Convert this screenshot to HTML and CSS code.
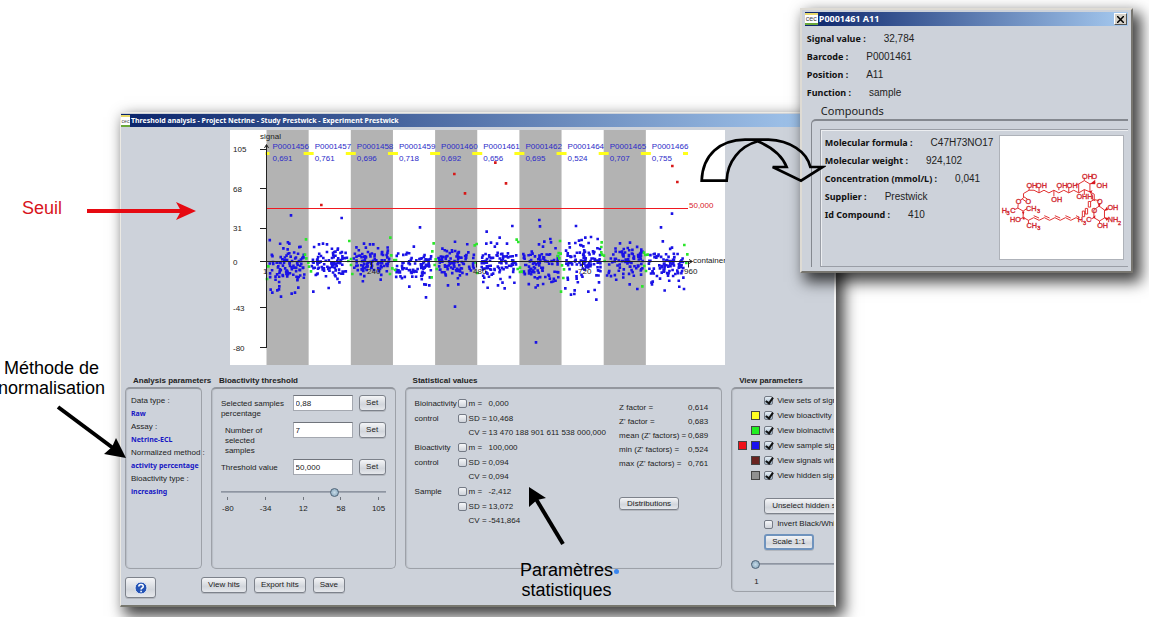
FILE: index.html
```html
<!DOCTYPE html>
<html lang="en">
<head>
<meta charset="utf-8">
<title>Threshold analysis</title>
<link rel="stylesheet" href="styles.css">
</head>
<body>
<div class="desktop">
  <main class="window main-window">
    <header class="titlebar"><span class="logo">cec</span><h1 class="title">Threshold analysis - Project Netrine - Study Prestwick - Experiment Prestwick</h1></header>
    <div class="chart-area">
      <svg class="chart" id="chart" viewBox="230 130 495 235" role="img" aria-label="Signal by container"></svg>
    </div>
    <div class="panels">
      <section class="group">
        <h2 class="group-title indent">Analysis parameters</h2>
        <dl class="box facts">
          <dt>Data type :</dt><dd>Raw</dd>
          <dt>Assay :</dt><dd>Netrine-ECL</dd>
          <dt>Normalized method :</dt><dd>activity percentage</dd>
          <dt>Bioactivity type :</dt><dd>increasing</dd>
        </dl>
      </section>
      <section class="group">
        <h2 class="group-title indent">Bioactivity threshold</h2>
        <div class="box threshold">
          <div class="fields">
            <label for="pct">Selected samples percentage</label><input class="text" id="pct" value="0,88"><button class="btn">Set</button>
            <label class="inset" for="num">Number of selected samples</label><input class="text" id="num" value="7"><button class="btn">Set</button>
            <label for="thr">Threshold value</label><input class="text" id="thr" value="50,000"><button class="btn">Set</button>
          </div>
          <input class="slider" type="range" min="-80" max="105" value="50" aria-label="Threshold">
          <div class="scale"><span>-80</span><span>-34</span><span>12</span><span>58</span><span>105</span></div>
        </div>
      </section>
      <section class="group">
        <h2 class="group-title indent">Statistical values</h2>
        <div class="box stats">
          <div class="stat-list">
            <div class="stat-set">
              <span>Bioinactivity</span><input class="check" type="checkbox" id="a1"><label for="a1">m =</label><span>0,000</span>
              <span>control</span><input class="check" type="checkbox" id="a2"><label for="a2">SD =</label><span>10,468</span>
              <span class="cv">CV =</span><span>13 470 188 901 611 538 000,000</span>
            </div>
            <div class="stat-set">
              <span>Bioactivity</span><input class="check" type="checkbox" id="b1"><label for="b1">m =</label><span>100,000</span>
              <span>control</span><input class="check" type="checkbox" id="b2"><label for="b2">SD =</label><span>0,094</span>
              <span class="cv">CV =</span><span>0,094</span>
            </div>
            <div class="stat-set">
              <span>Sample</span><input class="check" type="checkbox" id="c1"><label for="c1">m =</label><span>-2,412</span>
              <span></span><input class="check" type="checkbox" id="c2"><label for="c2">SD =</label><span>13,072</span>
              <span class="cv">CV =</span><span>-541,864</span>
            </div>
          </div>
          <div class="factors">
            <dl class="factor-list">
              <dt>Z factor =</dt><dd>0,614</dd>
              <dt>Z' factor =</dt><dd>0,683</dd>
              <dt>mean (Z' factors) =</dt><dd>0,689</dd>
              <dt>min (Z' factors) =</dt><dd>0,524</dd>
              <dt>max (Z' factors) =</dt><dd>0,761</dd>
            </dl>
            <button class="btn slim">Distributions</button>
          </div>
        </div>
      </section>
      <section class="group view-group">
        <h2 class="group-title indent">View parameters</h2>
        <div class="box view">
          <div class="option"><span class="swatches"></span><input class="check" type="checkbox" id="v1" checked><label for="v1">View sets of signals</label></div>
          <div class="option"><span class="swatches"><i class="swatch yellow"></i></span><input class="check" type="checkbox" id="v2" checked><label for="v2">View bioactivity control</label></div>
          <div class="option"><span class="swatches"><i class="swatch green"></i></span><input class="check" type="checkbox" id="v3" checked><label for="v3">View bioinactivity control</label></div>
          <div class="option"><span class="swatches"><i class="swatch red"></i><i class="swatch blue"></i></span><input class="check" type="checkbox" id="v4" checked><label for="v4">View sample signals</label></div>
          <div class="option"><span class="swatches"><i class="swatch brown"></i></span><input class="check" type="checkbox" id="v5" checked><label for="v5">View signals without</label></div>
          <div class="option"><span class="swatches"><i class="swatch gray"></i></span><input class="check" type="checkbox" id="v6" checked><label for="v6">View hidden signals</label></div>
          <div class="view-actions">
            <button class="btn wide">Unselect hidden signals</button>
            <div class="invert"><input class="check" type="checkbox" id="inv"><label for="inv">Invert Black/White</label></div>
            <button class="btn focus">Scale 1:1</button>
          </div>
          <input class="slider zoom" type="range" min="1" max="10" value="1" aria-label="Scale">
          <div class="zoom-label">1</div>
        </div>
      </section>
      <footer class="toolbar">
        <button class="btn help" aria-label="Help">
          <svg width="14" height="14" viewBox="0 0 14 14"><circle cx="7" cy="7" r="6" fill="#2453b5" stroke="#e8edf8"/><path d="M4.8 5.6C4.8 2.8 9.3 2.9 9.2 5.4C9.2 7 7.1 6.8 7.1 8.6M7.1 9.8V11.2" fill="none" stroke="#fff" stroke-width="1.6"/></svg>
        </button>
        <button class="btn">View hits</button>
        <button class="btn">Export hits</button>
        <button class="btn">Save</button>
      </footer>
    </div>
  </main>

  <aside class="window popup">
    <header class="titlebar"><span class="logo">cec</span><h2 class="title">P0001461 A11</h2>
      <button class="close" aria-label="Close"><svg width="7" height="7" viewBox="0 0 7 7"><path d="M0 0L7 7M7 0L0 7" stroke="#000" stroke-width="1.5"/></svg></button>
    </header>
    <dl class="details">
      <div><dt>Signal value :</dt><dd>32,784</dd></div>
      <div><dt>Barcode :</dt><dd>P0001461</dd></div>
      <div><dt>Position :</dt><dd>A11</dd></div>
      <div><dt>Function :</dt><dd>sample</dd></div>
    </dl>
    <h3 class="compounds-title">Compounds</h3>
    <div class="compounds">
      <div class="compound">
        <dl class="details">
          <div><dt>Molecular formula :</dt><dd>C47H73NO17</dd></div>
          <div><dt>Molecular weight :</dt><dd>924,102</dd></div>
          <div><dt>Concentration (mmol/L) :</dt><dd>0,041</dd></div>
          <div><dt>Supplier :</dt><dd>Prestwick</dd></div>
          <div><dt>Id Compound :</dt><dd>410</dd></div>
        </dl>
        <svg class="molecule" viewBox="30 16 372 372" role="img" aria-label="Molecule structure">
          <g class="bonds">
            <path d="M268 188L253 180L238 188L223 180L208 188L193 180L178 188L163 180L148 188L133 180L118 180L101 190V203M148 188V172M118 180V170M208 180V172M238 188V172M193 180V198M101 203L91 211M97 206L108 214M101 199L113 207M85 222L84 234L100 243M84 234L73 239M100 243L112 235M100 243V262L90 268M100 262L116 271L132 263L148 271L164 263L180 271L196 263L212 271L228 263L244 271L260 263L275 271M116 271V280M132 257L148 264M164 257L180 264M196 257L212 264M228 257L244 264M260 257L270 262M268 188V161L285 151L302 161V185L285 178L268 188M285 151V142M302 161L318 157M302 185L315 192V208L330 212M268 161L258 164M285 178V194M302 185L310 197V208L318 212M297 214V231H304V214ZM288 235V252H295V235ZM279 243V260H286V243ZM315 208L303 215M330 228L346 240V264L331 273L314 263V239L330 228M346 240L354 235M346 264L357 268M331 273V280M314 263L304 268M330 228V220"/>
            <path class="wedge" d="M302 161L318 162V148ZM346 243L357 240L353 230ZM330 232L326 220H335ZM346 262L358 264L353 273ZM96 245H104L101 254ZM97 267L104 260V269ZM310 264H318V255ZM298 184L306 188L310 180Z"/>
          </g>
          <g class="atoms">
            <text x="110" y="172">OH</text><text x="139" y="172">OH</text><text x="201" y="172">OH</text><text x="232" y="172">OH</text>
            <text x="278" y="145">OH</text><text x="307" y="145">O</text><text x="322" y="172">OH</text><text x="185" y="215">OH</text>
            <text x="261" y="208">OHH</text><text x="78" y="223">O</text><text x="107" y="221">O</text><text x="35" y="250">H</text><text class="sub" x="50" y="255">3</text><text x="61" y="250">C</text>
            <text x="109" y="243">CH</text><text class="sub" x="142" y="250">3</text><text x="60" y="277">HO</text><text x="110" y="293">CH</text><text class="sub" x="143" y="301">3</text>
            <text x="323" y="222">O</text><text x="307" y="248">O</text><text x="355" y="240">OH</text><text x="265" y="277">H</text><text class="sub" x="281" y="284">3</text><text x="291" y="277">C</text><text x="356" y="276">NH</text><text class="sub" x="387" y="284">2</text><text x="324" y="294">OH</text>
          </g>
        </svg>
      </div>
    </div>
  </aside>

  <p class="note seuil">Seuil</p>
  <svg class="arrow red-arrow" width="110" height="20" viewBox="86 201 110 20"><path d="M87 211H181" stroke="#e60a12" stroke-width="4"/><path d="M196 211L176 202L181 211L176 220Z" fill="#e60a12"/></svg>
  <p class="note method">Méthode de<br>normalisation</p>
  <svg class="arrow method-arrow" width="72" height="56" viewBox="55 403 72 56"><path d="M58 407L113 448" stroke="#000" stroke-width="4"/><path d="M126 458L116 438L112 447L104 454Z"/></svg>
  <p class="note params">Paramètres<br>statistiques</p>
  <span class="dot"></span>
  <svg class="arrow params-arrow" width="42" height="62" viewBox="525 485 42 62"><path d="M563 544L536 499" stroke="#000" stroke-width="4"/><path d="M529 487L546 498L537 500L529 507Z"/></svg>
  <svg class="arrow curve-arrow" width="126" height="46" viewBox="30 37 378 138"><path d="M35 168C38 90 90 46 165 45H235C300 48 350 80 361 127H398L333 168L248 127H290C275 90 240 65 203 50C150 65 112 110 110 168Z" fill="none" stroke="#000" stroke-width="8"/></svg>
</div>
<script src="chart.js"></script>
</body>
</html>
```

FILE: styles.css
```css
* { box-sizing: border-box; }
body { margin: 0; background: #fff; color: #222; font: 8px/10px "Liberation Sans", Arial, sans-serif; }
h1, h2, h3, p, dl, dd { margin: 0; }
button, input { font: inherit; color: inherit; margin: 0; }

.desktop { position: relative; min-height: 100vh; overflow: hidden; }
.window { position: absolute; background: #cdd2da; overflow: hidden; }
.main-window { top: 112px; left: 120px; right: 313px; padding: 1px 0 7px; border: 1px solid #eceae4; border-right: 2px solid #f4f4f4; border-bottom: 2px solid #77776e; box-shadow: 6px 7px 14px 2px rgba(0, 0, 0, .75); }
.popup { top: 8px; right: 16px; width: 29%; padding: 2px 3px 4px; border: 2px solid #dedbd4; border-right-color: #77756f; border-bottom-color: #77756f; box-shadow: 6px 7px 14px 2px rgba(0, 0, 0, .75); }

.titlebar { display: flex; align-items: center; gap: 1px; height: 13px; background: linear-gradient(90deg, #0a246a, #a6caf0); color: #fff; }
.title { flex: 1; font: bold 7px/12px "Noto Sans", sans-serif; white-space: nowrap; }
.logo { width: 9px; height: 12px; background: #fff; border-top: 2px solid #e8d96a; border-bottom: 2px solid #6aa83a; color: #444; font-size: 5px; line-height: 8px; text-align: center; }
.popup .titlebar { height: 14px; }
.popup .title { font-size: 9px; }
.popup .logo { width: 13px; font-size: 7px; }
.close { display: grid; place-items: center; width: 13px; height: 12px; padding: 0; background: #d4d0c8; border: 1px solid; border-color: #fff #555 #555 #fff; margin-right: 1px; }

.chart-area { padding: 3px 0 0 109px; }
.chart { display: block; width: 495px; height: 235px; background: #fff; font-size: 8px; }
.chart .band { fill: #b3b3b3; }
.chart .ink { fill: #222; }
.chart .plate { fill: #2b2bc8; }
.chart .axis { fill: none; stroke: #222; stroke-width: 1; }
.chart .target { stroke: #ffff1a; stroke-width: 3; }
.chart .limit { fill: #f01820; }
.chart .limit-text { fill: #d8222a; }
.chart .signal-blue { fill: #1a12e6; }
.chart .signal-green { fill: #2be62b; }
.chart .signal-hit { fill: #d81818; }

.panels { display: grid; grid-template-columns: 77fr 185fr 318fr 103fr; grid-template-rows: auto auto; column-gap: 9px; margin-top: 11px; padding-left: 4px; }
.group { display: flex; flex-direction: column; min-width: 0; }
.group-title { font: bold 8px/10px "Liberation Sans", Arial, sans-serif; white-space: nowrap; padding-left: 8px; }
.box { flex: 1; margin-top: 1px; min-height: 182px; border: 1px solid #9da1a8; border-top: 2px solid #93979e; border-radius: 5px; box-shadow: inset 1px 0 1px #b9bdc5; }
.facts { padding: 5px 0 0 5px; line-height: 13px; white-space: nowrap; }
.facts dd { font: bold 7px/13px "Noto Sans", sans-serif; color: #1616c4; }

.threshold { padding: 6px 9px; }
.fields { display: grid; grid-template-columns: 1fr 60px 27px; grid-template-rows: 27px 37px 25px; column-gap: 6px; align-items: start; }
.fields label { padding-top: 4px; }
.fields .inset { padding-left: 4px; padding-right: 16px; }
.text { width: 100%; height: 16px; padding: 0 2px; border: 1px solid #a4a8b0; border-top-color: #70747c; background: #fff; }
.btn { height: 16px; padding: 0 5px; border: 1px solid #7d828b; border-radius: 3px; background: linear-gradient(#f4f5f7, #d2d6dc 60%, #e6e8ec); box-shadow: 0 1px 0 #b3b7be; line-height: 12px; white-space: nowrap; color: #222; }
.slider { appearance: none; display: block; width: 100%; height: 10px; background: linear-gradient(transparent 4px, #858c98 4px, #a9b0bb 6px, transparent 6px); }
.slider::-webkit-slider-thumb { appearance: none; width: 9px; height: 9px; border: 1px solid #4e6478; border-radius: 50%; background: radial-gradient(#c6dbe8, #7f9fb6); }
.threshold .slider { margin-top: 3px; }
.scale { display: flex; justify-content: space-between; }
.scale span { display: flex; flex-direction: column; align-items: center; gap: 4px; width: 14px; line-height: 10px; }
.scale span::before { content: ""; width: 1px; height: 3px; background: #70757e; }

.stats { display: flex; justify-content: space-between; padding: 7px 13px 0 9px; white-space: nowrap; }
.stat-set { display: grid; grid-template-columns: 41px 9px 18px auto; grid-template-rows: 15px 15px 14px; column-gap: 2px; align-items: center; }
.stat-set .cv { grid-column: 1 / 4; justify-self: end; }
.check { appearance: none; display: grid; flex: none; width: 9px; height: 9px; border: 1px solid #747a85; border-radius: 2px; background: linear-gradient(#f6f7f9, #cfd3da); }
.check:checked { background: linear-gradient(#e6eef5, #9fb6c8); }
.check:checked::after { content: ""; width: 3px; height: 6px; margin: -1px 0 0 2px; border: solid #111; border-width: 0 2px 2px 0; transform: rotate(35deg); }
.factors { display: flex; flex-direction: column; align-items: flex-start; gap: 27px; padding-top: 5px; }
.factor-list { display: grid; grid-template-columns: 69px auto; line-height: 13px; row-gap: 1px; }
.slim { height: 13px; width: 60px; line-height: 10px; }

.view-group { grid-column: 4; grid-row: 1 / 3; }
.view { flex: none; height: 205px; margin-right: -40px; padding: 4px 0 0 6px; white-space: nowrap; overflow: hidden; }
.option { display: flex; align-items: center; gap: 4px; height: 15px; }
.swatches { display: flex; justify-content: flex-end; gap: 4px; width: 22px; }
.swatch { width: 9px; height: 9px; border: 1px solid #444; }
.yellow { background: #ffff22; }
.green { background: #22ee22; }
.red { background: #f01018; }
.blue { background: #1a10ee; }
.brown { background: #6a2420; }
.gray { background: #909090; }
.view-actions { display: flex; flex-direction: column; align-items: flex-start; gap: 5px; padding: 15px 0 0 26px; }
.wide { padding: 0 7px; }
.invert { display: flex; align-items: center; gap: 4px; }
.focus { padding: 0 6px; border: 2px solid #6f93bd; }
.zoom { width: 200px; margin: 9px 0 0 13px; }
.zoom-label { padding: 8px 0 0 16px; }

.toolbar { grid-column: 1 / 4; display: flex; align-items: flex-start; gap: 7px; padding-top: 8px; }
.toolbar .btn { height: 16px; padding: 0 6px; }
.toolbar .help { display: grid; place-items: center; width: 31px; height: 21px; padding: 0; margin-right: 38px; }

.details { padding-top: 4px; }
.details div { display: flex; align-items: center; gap: 18px; height: 18px; padding-left: 2px; }
.details dt { font: bold 9px/18px "Noto Sans", sans-serif; color: #111; white-space: nowrap; }
.details dd { font-size: 10px; white-space: nowrap; }
.compounds-title { font: 11px/14px "Noto Sans", sans-serif; padding: 2px 0 0 16px; }
.compounds { margin: 1px 0 0 6px; padding: 8px 0 0 8px; border: solid #84888f; border-width: 2px 0 0 1px; border-top-left-radius: 5px; }
.compound { display: flex; justify-content: space-between; padding: 0 4px 6px 2px; border: 1px solid #9a9ea6; border-right: 0; box-shadow: inset 1px 1px 0 #eceef1; }
.molecule { flex: none; width: 125px; height: 125px; margin-top: 5px; background: #fff; border: 1px solid #aeb2b9; }
.bonds path { fill: none; stroke: #e03030; stroke-width: 3; }
.bonds .wedge { fill: #d81820; stroke: none; }
.atoms { font-size: 22px; fill: #d02830; stroke: #d02830; stroke-width: 1; }
.atoms .sub { font-size: 17px; }

.note { position: absolute; font-size: 18px; line-height: 20px; color: #000; text-align: center; white-space: nowrap; }
.seuil { left: 22px; top: 198px; color: #d8141c; }
.method { left: -2px; top: 358px; }
.params { left: 520px; top: 560px; }
.dot { position: absolute; left: 614px; top: 569px; width: 5px; height: 5px; border-radius: 50%; background: #3a86f0; }
.arrow { position: absolute; }
.red-arrow { left: 86px; top: 201px; }
.method-arrow { left: 55px; top: 403px; }
.params-arrow { left: 525px; top: 485px; }
.curve-arrow { right: 323px; top: 137px; }
```

FILE: chart.js
```js
const svg = document.getElementById("chart");
const BAND = 42.15, X0 = 266.5, ZERO = 261.5;
const parts = [];
const text = (x, y, t, cls = "ink") => parts.push(`<text x="${x}" y="${y}" class="${cls}">${t}</text>`);

const plates = [
  ["P0001456", "0,691", 265, 9], ["P0001457", "0,761", 263, 8],
  ["P0001458", "0,696", 263, 7], ["P0001459", "0,718", 267, 7],
  ["P0001460", "0,692", 263, 8], ["P0001461", "0,656", 264, 8],
  ["P0001462", "0,695", 267, 9], ["P0001464", "0,524", 262, 9],
  ["P0001465", "0,707", 260, 8], ["P0001466", "0,755", 266, 8]
];
plates.forEach((p, i) => {
  if (i % 2 === 0) parts.push(`<rect class="band" x="${X0 + i * BAND}" y="130" width="${BAND}" height="235"/>`);
});

let target = `M${X0 - 1} 153.5h4`;
for (let i = 1; i < 10; i++) target += `M${X0 + i * BAND - 5} 153.5h10`;
parts.push(`<path class="target" d="${target}M683 153.5h5"/>`);
plates.forEach((p, i) => {
  text(272.5 + i * BAND, 149, p[0], "plate");
  text(272.5 + i * BAND, 161, p[1], "plate");
});

let seed = 11;
const rnd = () => (seed = (seed * 16807) % 2147483647) / 2147483647;
const mark = (x, y) => `M${x - 1.3} ${y - 1.3}h2.6v2.6h-2.6z`;
const draw = (cls, d) => parts.push(`<path class="${cls}" d="${d}"/>`);

/* Dense cloud of sample signals around the zero line of each plate */
let cloud = "";
plates.forEach((p, i) => {
  for (let k = 0; k < 88; k++) {
    const g = rnd() + rnd() + rnd() + rnd() - 2;
    cloud += mark(X0 + i * BAND + 3 + rnd() * 36, p[2] + g * p[3] * 1.7);
  }
});

/* Isolated signals: [x, y] in thirds of a pixel from (225,125) */
const blue = [[198,271],[193,356],[168,515],[200,506],[210,503],[137,494],[142,503],[163,484],[162,493],[157,496],[188,373],
  [350,279],[265,500],[311,489],[282,358],[294,356],[306,358],[467,464],[435,358],[445,358],[417,356],
  [585,307],[603,517],[553,485],[613,481],[598,478],[690,545],[669,481],[700,478],
  [785,320],[862,303],[824,338],[784,356],[798,353],[816,356],[846,356],[839,490],[819,481],
  [943,285],[945,304],[976,342],[978,352],[958,350],[954,365],[942,358],[933,652],
  [1053,303],[1062,347],[1070,345],[1081,338],[1098,336],[1118,342],[1066,360],[1075,364],[1114,524],[1049,496],[1038,509],[1048,507],[1090,500],[1109,495],[1021,490],[1122,472],
  [1215,353],[1185,355],[1237,492],[1214,478],[1341,266],[1308,307],[1341,368],[1377,492],[1281,478]];
const green = [[243,343],[240,389],[244,400],[250,413],[252,425],[258,439],[130,424],[126,462],[373,348],[370,408],[378,420],[378,402],[382,447],
  [496,338],[499,391],[502,430],[508,405],[513,405],[510,435],[495,447],[626,355],[622,379],[632,403],[629,420],[635,432],[620,457],[755,357],[749,361],[752,412],[757,444],
  [875,344],[880,351],[878,432],[885,428],[885,441],[890,440],[1005,348],[1001,384],[998,393],[1007,386],[1003,400],[1011,421],[1017,433],[1015,459],[1008,500],
  [1130,352],[1129,366],[1129,382],[1137,392],[1131,389],[1139,408],[1257,383],[1261,390],[1268,389],[1258,423],[1263,438],[1252,484],[1378,360],[1387,388],[1384,414]];
const hits = [[289,240],[688,147],[720,205],[811,113],[843,175],[1342,123],[1357,171]];
const place = list => list.map(([x, y]) => mark(225 + x / 3, 125 + y / 3)).join("");
draw("signal-blue", cloud + place(blue));
draw("signal-green", place(green));
draw("signal-hit", place(hits));

parts.push(`<path class="axis" d="M266.5 347V145M264.5 148L266.5 144.5L268.5 148M260 149.5H267M260 188.5H267M260 228.5H267M260 ${ZERO}H692M689 259.5L692.5 ${ZERO}L689 263.5M260 307.5H267M260 347.5H267M371.5 ${ZERO}v6M476.5 ${ZERO}v6M582.5 ${ZERO}v6M688.5 ${ZERO}v6"/>`);
parts.push('<rect class="limit" x="267" y="208" width="421" height="1"/>');
text(689, 208, "50,000", "limit-text");
text(260, 139, "signal");
text(693, 263, "container");
[["105", 152], ["68", 192], ["31", 231], ["0", 265], ["-43", 311], ["-80", 351]].forEach(([t, y]) => text(233, y, t));
[["1", 263], ["240", 367], ["480", 473], ["720", 578], ["960", 684]].forEach(([t, x]) => text(x, 274, t));
svg.innerHTML = parts.join("");
```
